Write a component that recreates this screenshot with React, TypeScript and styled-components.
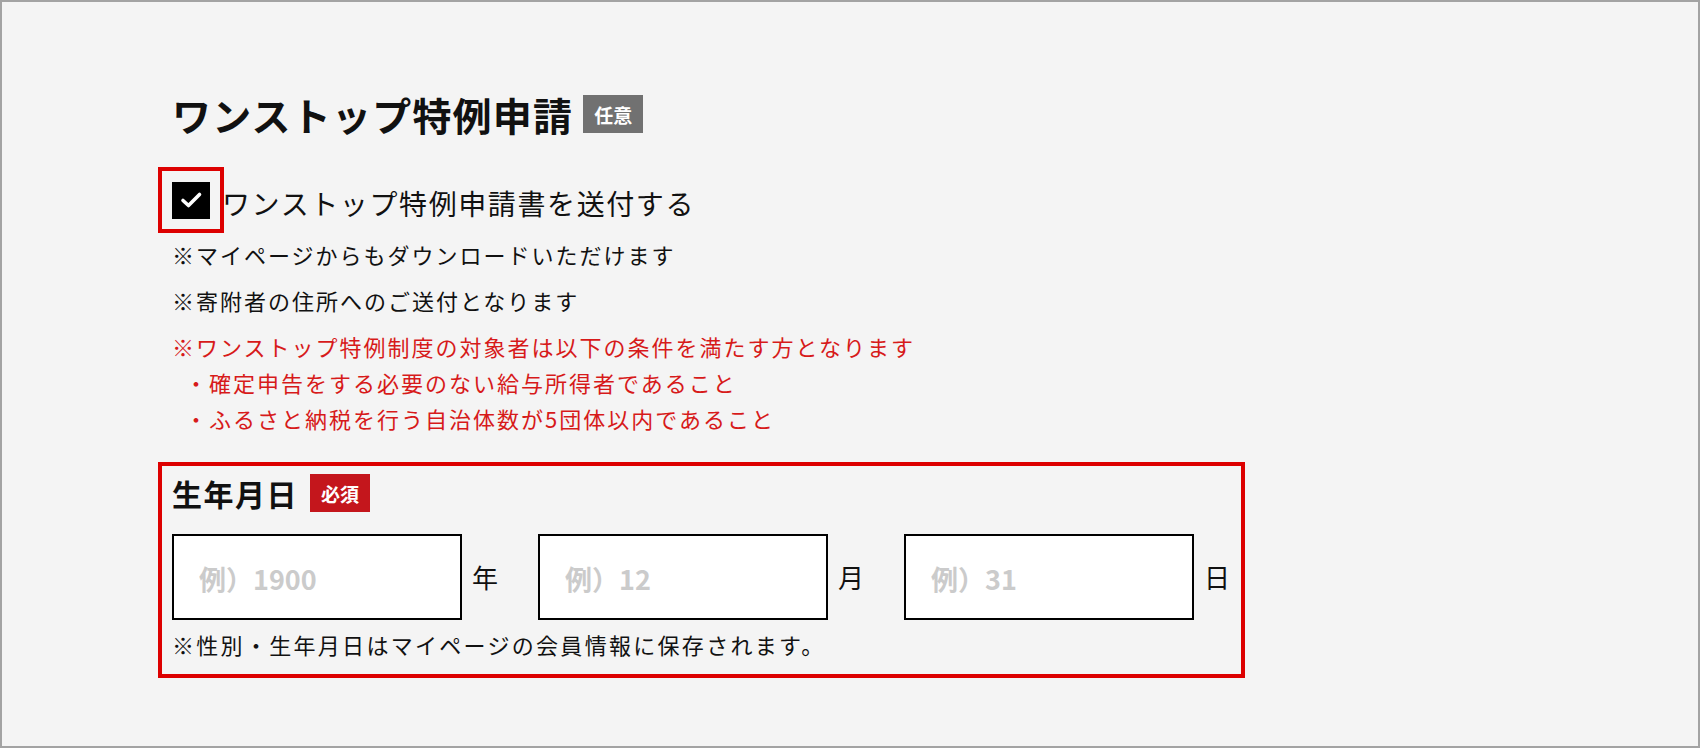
import styled, { createGlobalStyle } from 'styled-components'

const Global = createGlobalStyle`
  html, body { margin: 0; padding: 0; }
  body {
    background: #f4f4f4;
    font-family: "Noto Sans CJK JP", "Noto Sans", sans-serif;
    color: #111;
  }
  * { box-sizing: border-box; }
`

const Page = styled.div`
  width: 1700px;
  height: 748px;
  border: 2px solid #a3a3a3;
  background: #f4f4f4;
  padding: 90px 0 0 156px;
`

const TitleRow = styled.div`
  display: flex;
  align-items: center;
  height: 44px;
  padding-left: 14px;
  gap: 10px;
`

const Title = styled.h2`
  margin: 0;
  font-size: 39px;
  font-weight: 700;
  line-height: 44px;
  letter-spacing: 1.2px;
`

const Badge = styled.span<{ $bg: string }>`
  display: inline-flex;
  align-items: center;
  justify-content: center;
  width: 60px;
  height: 38px;
  background: ${p => p.$bg};
  color: #fff;
  font-size: 19px;
  font-weight: 700;
`

const CheckRow = styled.label`
  display: flex;
  align-items: center;
  margin-top: 31px;
  cursor: pointer;
`

const FocusRing = styled.span`
  display: flex;
  align-items: center;
  justify-content: center;
  width: 66px;
  height: 66px;
  border: 4px solid #dd0000;
`

const Box = styled.span`
  display: flex;
  width: 38px;
  height: 37px;
  background: #000;
`

const CheckLabel = styled.span`
  margin-left: -2px;
  font-size: 28px;
  letter-spacing: 1.6px;
  line-height: 40px;
  padding-top: 6px;
`

const Notes = styled.div`
  padding-left: 14px;
  margin-top: 3px;
`

const Note = styled.p<{ $red?: boolean; $indent?: boolean; $gap?: number }>`
  margin: ${p => p.$gap ?? 0}px 0 0;
  padding-left: ${p => (p.$indent ? 13 : 0)}px;
  font-size: 22px;
  letter-spacing: 2px;
  line-height: 36px;
  color: ${p => (p.$red ? '#d71a1a' : '#111')};
`

const DateBox = styled.section`
  width: 1087px;
  margin-top: 26px;
  border: 4px solid #dd0000;
  padding: 8px 10px 15px;
`

const DateTitleRow = styled.div`
  display: flex;
  align-items: center;
  gap: 12px;
  height: 38px;
`

const DateTitle = styled.h3`
  margin: 0;
  font-size: 30px;
  font-weight: 700;
  letter-spacing: 1.5px;
`

const Fields = styled.div`
  display: flex;
  align-items: center;
  margin-top: 22px;
  gap: 40px;
`

const Field = styled.div`
  display: flex;
  align-items: center;
  gap: 10px;
`

const Input = styled.input`
  width: 290px;
  height: 86px;
  border: 2px solid #000;
  background: #fff;
  padding: 2px 0 0 25px;
  font-family: "Noto Sans CJK JP", sans-serif;
  font-size: 27px;
  font-weight: 700;
  outline: none;
  &::placeholder { color: #cbcbcb; }
`

const Unit = styled.span`
  font-size: 26px;
  line-height: 30px;
`

const SmallNote = styled.p`
  margin: 9px 0 0;
  font-size: 22px;
  letter-spacing: 2.3px;
  line-height: 30px;
`

const fields = [
  { ph: '例）1900', unit: '年' },
  { ph: '例）12', unit: '月' },
  { ph: '例）31', unit: '日' },
]

const App: React.FC = () => {
  return (
    <>
      <Global />
      <Page>
        <TitleRow>
          <Title>ワンストップ特例申請</Title>
          <Badge $bg="#717171">任意</Badge>
        </TitleRow>
        <CheckRow>
          <FocusRing>
            <Box>
              <svg width="38" height="37" viewBox="0 0 38 37">
                <polyline points="11,18.5 16.5,23.5 27.5,12.5" fill="none" stroke="#fff" strokeWidth="3.6" strokeLinecap="round" strokeLinejoin="round" />
              </svg>
            </Box>
          </FocusRing>
          <CheckLabel>ワンストップ特例申請書を送付する</CheckLabel>
        </CheckRow>
        <Notes>
          <Note>※マイページからもダウンロードいただけます</Note>
          <Note $gap={10}>※寄附者の住所へのご送付となります</Note>
          <Note $red $gap={10}>※ワンストップ特例制度の対象者は以下の条件を満たす方となります</Note>
          <Note $red $indent>・確定申告をする必要のない給与所得者であること</Note>
          <Note $red $indent>・ふるさと納税を行う自治体数が5団体以内であること</Note>
        </Notes>
        <DateBox>
          <DateTitleRow>
            <DateTitle>生年月日</DateTitle>
            <Badge $bg="#c4161c">必須</Badge>
          </DateTitleRow>
          <Fields>
            {fields.map(f => (
              <Field key={f.unit}>
                <Input placeholder={f.ph} inputMode="numeric" />
                <Unit>{f.unit}</Unit>
              </Field>
            ))}
          </Fields>
          <SmallNote>※性別・生年月日はマイページの会員情報に保存されます。</SmallNote>
        </DateBox>
      </Page>
    </>
  )
}

export default App
